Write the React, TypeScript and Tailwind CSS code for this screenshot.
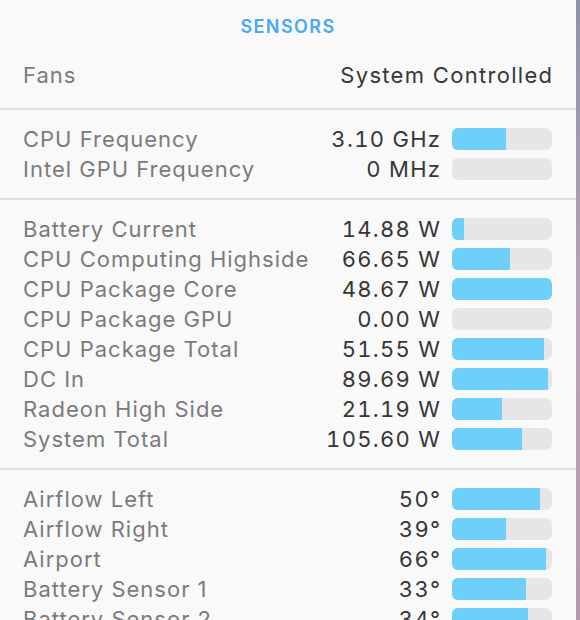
import React from "react";

type Row = { label: string; value: string; fill: number };

const freq: Row[] = [
  { label: "CPU Frequency", value: "3.10 GHz", fill: 54 },
  { label: "Intel GPU Frequency", value: "0 MHz", fill: 0 },
];

const power: Row[] = [
  { label: "Battery Current", value: "14.88 W", fill: 12 },
  { label: "CPU Computing Highside", value: "66.65 W", fill: 58 },
  { label: "CPU Package Core", value: "48.67 W", fill: 100 },
  { label: "CPU Package GPU", value: "0.00 W", fill: 0 },
  { label: "CPU Package Total", value: "51.55 W", fill: 92 },
  { label: "DC In", value: "89.69 W", fill: 96 },
  { label: "Radeon High Side", value: "21.19 W", fill: 50 },
  { label: "System Total", value: "105.60 W", fill: 70 },
];

const temps: Row[] = [
  { label: "Airflow Left", value: "50°", fill: 88 },
  { label: "Airflow Right", value: "39°", fill: 54 },
  { label: "Airport", value: "66°", fill: 94 },
  { label: "Battery Sensor 1", value: "33°", fill: 74 },
  { label: "Battery Sensor 2", value: "34°", fill: 76 },
];

function SensorRow({ r }: { r: Row }) {
  return (
    <div className="flex h-[30px] items-center">
      <div className="flex-1 text-[#7b7b7b] whitespace-nowrap tracking-[1px]">{r.label}</div>
      <div className="text-[#363636] whitespace-nowrap text-right tabular-nums tracking-[1.3px] mr-[-1.3px]">
        {r.value}
      </div>
      <div className="ml-[12px] h-[22px] w-[100px] shrink-0 overflow-hidden rounded-[6px] bg-[#e6e6e6]">
        <div className="h-full bg-[#6dcffa]" style={{ width: `${r.fill}px` }} />
      </div>
    </div>
  );
}

function Section({ rows }: { rows: Row[] }) {
  return (
    <div className="border-t-2 border-[#e0e0e0] py-[14px] pr-[24px] pl-[23px]">
      {rows.map((r) => (
        <SensorRow key={r.label} r={r} />
      ))}
    </div>
  );
}

export default function App() {
  return (
    <div className="flex h-[620px] w-[580px] overflow-hidden bg-[#f9f9f9]">
      <div
        className="h-full w-[576px] overflow-hidden bg-[#f9f9f9] text-[22px] leading-[30px]"
        style={{ fontFamily: "Inter, 'Noto Sans', sans-serif" }}
      >
        <div className="flex h-[54px] items-center justify-center text-[18px] font-semibold tracking-[1.4px] text-[#4aa8f7]">
          SENSORS
        </div>
        <div className="flex h-[42px] items-center pl-[23px] pr-[24px] mb-[12px]">
          <div className="flex-1 text-[#7b7b7b] tracking-[1px]">Fans</div>
          <div className="text-[#363636] tracking-[1.3px] mr-[-1.3px]">System Controlled</div>
        </div>
        <Section rows={freq} />
        <Section rows={power} />
        <Section rows={temps} />
      </div>
      <div className="h-full w-[4px] bg-gradient-to-b from-[#8e93a8] via-[#b8a3b6] to-[#b49aab]" />
    </div>
  );
}
